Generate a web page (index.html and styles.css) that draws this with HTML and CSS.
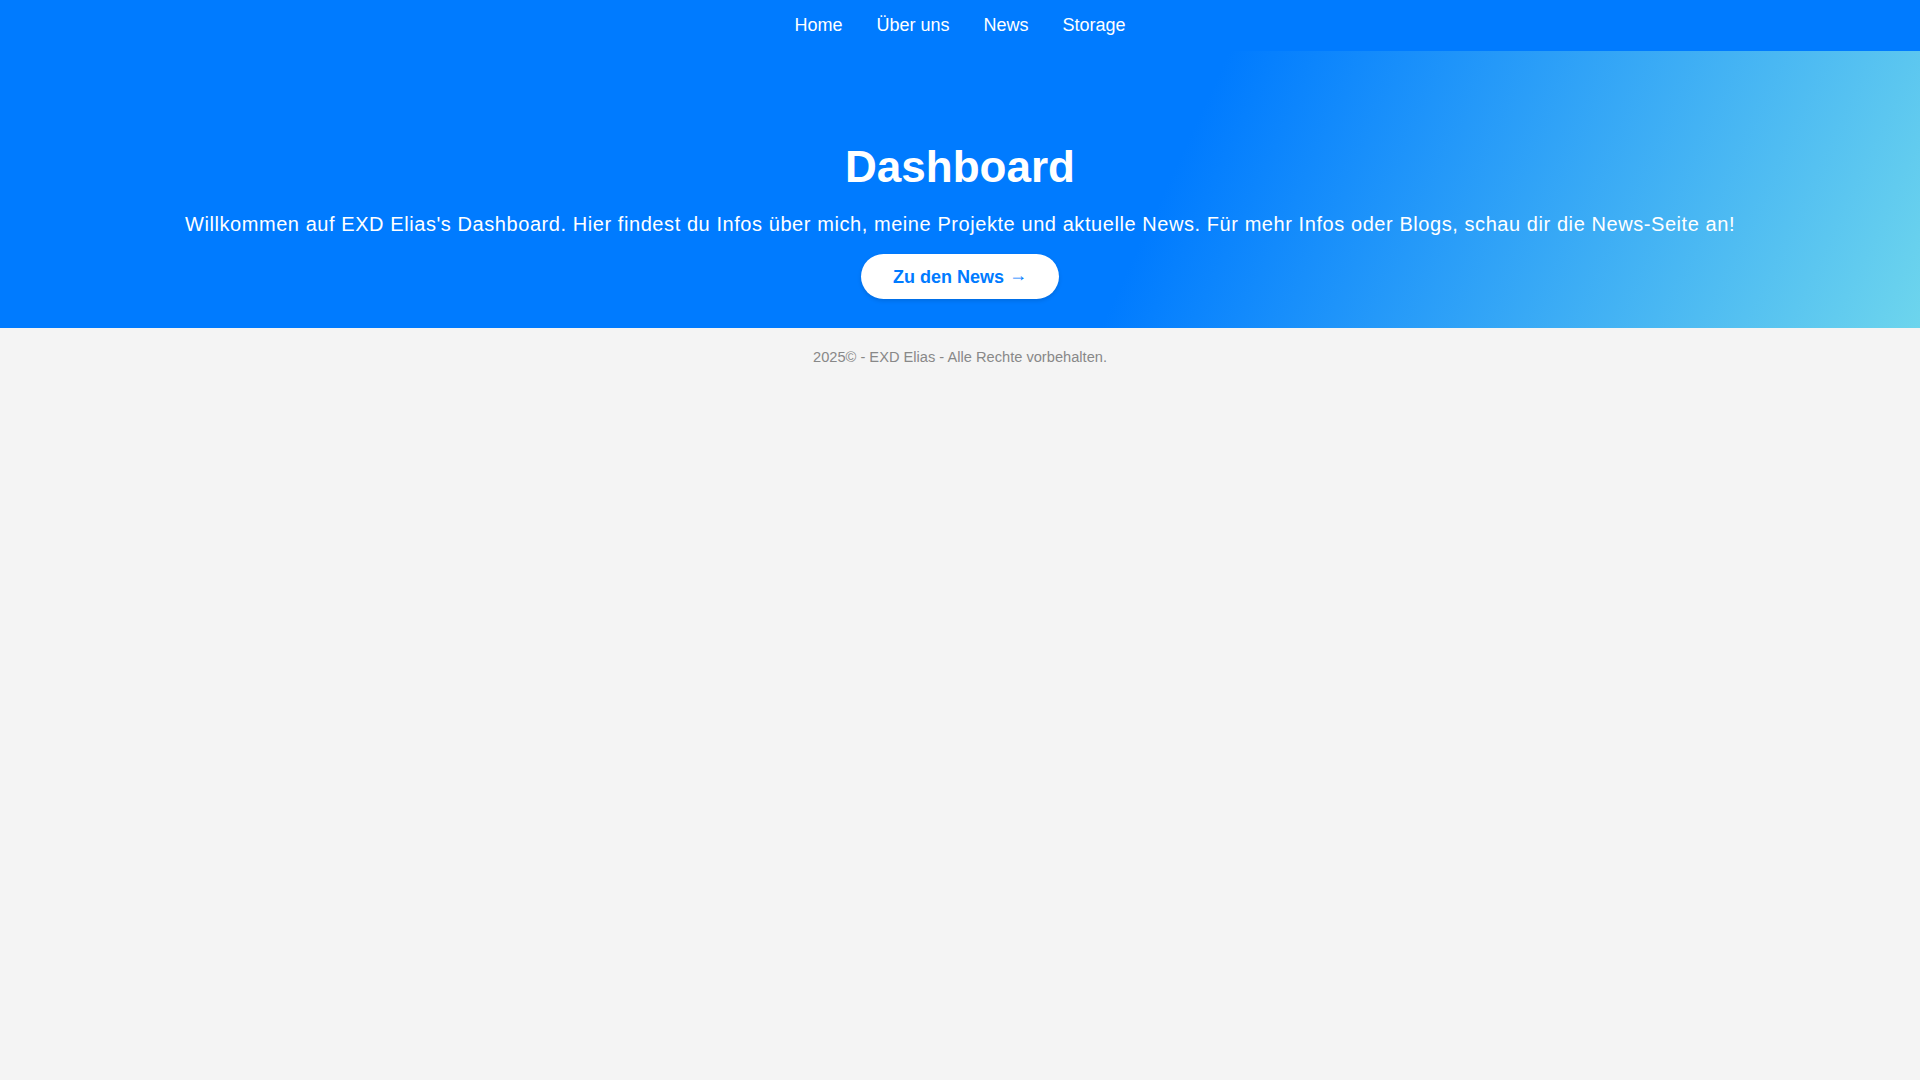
FILE: index.html
```html
<!DOCTYPE html>
<html lang="de">
<head>
<meta charset="utf-8">
<title>Dashboard</title>
<link rel="stylesheet" href="styles.css">
</head>
<body>
<nav class="topnav">
  <a class="nav-link" href="#">Home</a>
  <a class="nav-link" href="#">Über uns</a>
  <a class="nav-link" href="#">News</a>
  <a class="nav-link" href="#">Storage</a>
</nav>
<header class="hero">
  <h1 class="hero-title">Dashboard</h1>
  <p class="hero-text">Willkommen auf EXD Elias's Dashboard. Hier findest du Infos über mich, meine Projekte und aktuelle News. Für mehr Infos oder Blogs, schau dir die News-Seite an!</p>
  <a class="hero-button" href="#">Zu den News <span class="arrow">→</span></a>
</header>
<footer class="footer">2025© - EXD Elias - Alle Rechte vorbehalten.</footer>
</body>
</html>
```

FILE: styles.css
```css
html, body {
  margin: 0;
  padding: 0;
}
body {
  background: #f4f4f4;
  font-family: "Liberation Sans", Arial, sans-serif;
  min-height: 100vh;
}
.topnav {
  background: #007bff;
  height: 51px;
  display: flex;
  justify-content: center;
  align-items: center;
  gap: 34px;
}
.nav-link {
  color: #ffffff;
  text-decoration: none;
  font-size: 18px;
}
.hero {
  background: linear-gradient(115deg, #007bff 60%, #6dd5ed 100%);
  height: 277px;
  box-sizing: border-box;
  padding-top: 91px;
  text-align: center;
  color: #ffffff;
}
.hero-title {
  margin: 0 0 21px;
  font-size: 44px;
  font-weight: bold;
  line-height: 50px;
}
.hero-text {
  margin: 0 0 18px;
  font-size: 20px;
  line-height: 23px;
  letter-spacing: 0.57px;
}
.hero-button {
  display: inline-block;
  background: #ffffff;
  color: #007bff;
  font-weight: bold;
  font-size: 18px;
  line-height: 20px;
  padding: 12px 32px;
  border-radius: 24px;
  text-decoration: none;
  box-shadow: 0 2px 4px rgba(0, 0, 0, 0.12);
}
.arrow {
  font-weight: normal;
  line-height: 1;
  vertical-align: 2px;
}
.footer {
  text-align: center;
  color: #888888;
  font-size: 14.65px;
  padding: 21px 0;
}
```
